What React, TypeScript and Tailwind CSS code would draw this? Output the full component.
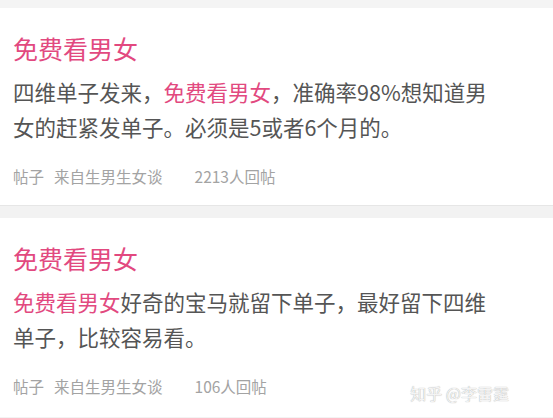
import React from "react";

const font = { fontFamily: '"Noto Sans CJK SC", "Noto Sans", sans-serif' };

function Card({ body, count, watermark }: { body: React.ReactNode; count: string; watermark?: boolean }) {
  return (
    <div className="relative bg-white pl-[13px] pr-[56px] pt-[25px]">
      <div className="text-[25px] leading-[30px] text-[#e2497f]">免费看男女</div>
      <div className="mt-[11px] text-[21.5px] leading-[35px] text-[#555555]">{body}</div>
      <div className="mt-[22px] flex h-[20px] items-center text-[15.5px] leading-[20px] text-[#a3a3a3]">
        <span>帖子</span>
        <span className="ml-[10px]">来自生男生女谈</span>
        <span className="ml-[32px]">{count}</span>
      </div>
      <div className={watermark ? "h-[21px]" : "h-[19px]"} />
      {watermark && (
        <div
          className="absolute right-[44px] bottom-[14px] text-[16px] leading-[20px] text-[#f4f4f4]"
          style={{ textShadow: "0 0 1px #9a9a9a" }}
        >
          知乎 @李雷霆
        </div>
      )}
    </div>
  );
}

export default function App() {
  return (
    <div className="w-[553px] h-[418px] overflow-hidden bg-[#f3f3f3]" style={font}>
      <div className="h-[8px] bg-[#f4f4f4]" />
      <Card
        body={
          <>
            四维单子发来，<span className="text-[#e2497f]">免费看男女</span>，准确率98%想知道男女的赶紧发单子。必须是5或者6个月的。
          </>
        }
        count="2213人回帖"
      />
      <div className="h-[13px] border-t border-[#e6e6e6] bg-[#f2f2f2]" />
      <Card
        body={
          <>
            <span className="text-[#e2497f]">免费看男女</span>好奇的宝马就留下单子，最好留下四维单子，比较容易看。
          </>
        }
        count="106人回帖"
        watermark
      />
    </div>
  );
}
